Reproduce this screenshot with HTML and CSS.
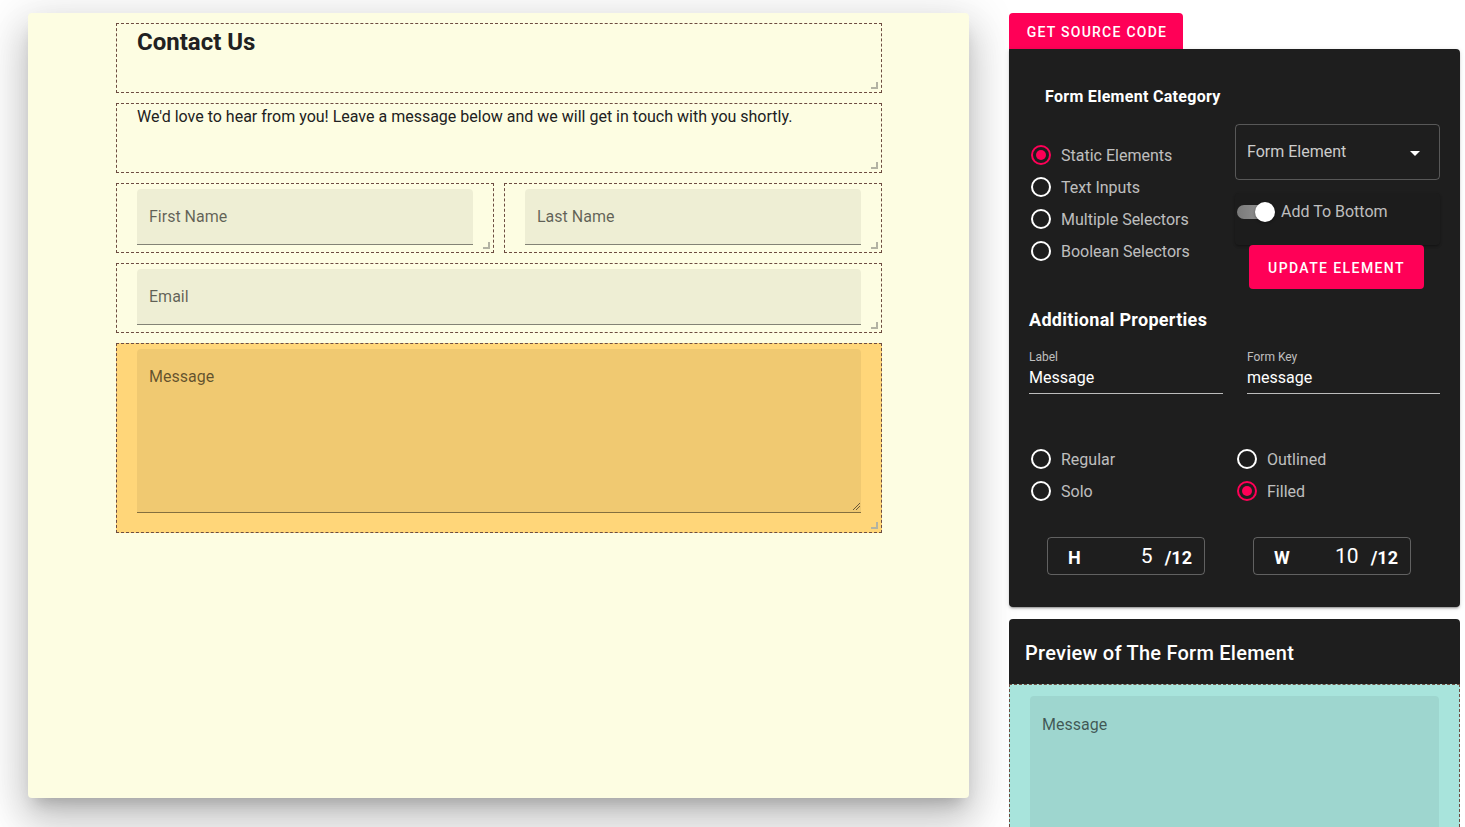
FILE: index.html
```html
<!DOCTYPE html>
<html lang="en">
<head>
<meta charset="utf-8">
<title>Form Builder</title>
<link rel="stylesheet" href="styles.css">
</head>
<body>
<div class="page">
  <section class="canvas">
    <div class="form">
      <div class="cell grip">
        <h1 class="title">Contact Us</h1>
      </div>
      <div class="cell grip cell-text">
        <p class="desc">We'd love to hear from you! Leave a message below and we will get in touch with you shortly.</p>
      </div>
      <div class="row">
        <div class="cell grip">
          <div class="field"><span class="field-label">First Name</span></div>
        </div>
        <div class="cell grip">
          <div class="field"><span class="field-label">Last Name</span></div>
        </div>
      </div>
      <div class="cell grip">
        <div class="field"><span class="field-label">Email</span></div>
      </div>
      <div class="cell grip cell-active">
        <div class="field field-area">
          <span class="field-label">Message</span>
          <svg class="area-grip" width="8" height="8" viewBox="0 0 8 8"><path d="M1 8 L8 1 M4 8 L8 4" stroke="#6b5a3a" stroke-width="1"/></svg>
        </div>
      </div>
    </div>
  </section>

  <aside class="side">
    <button class="btn btn-source">Get Source Code</button>
    <div class="panel">
      <h2 class="panel-title">Form Element Category</h2>
      <div class="split">
        <div class="radios">
          <label class="radio on"><span class="radio-icon"></span><span>Static Elements</span></label>
          <label class="radio"><span class="radio-icon"></span><span>Text Inputs</span></label>
          <label class="radio"><span class="radio-icon"></span><span>Multiple Selectors</span></label>
          <label class="radio"><span class="radio-icon"></span><span>Boolean Selectors</span></label>
        </div>
        <div class="controls">
          <div class="select"><span>Form Element</span><span class="caret"></span></div>
          <div class="switch-box">
            <span class="switch"><span class="track"></span><span class="thumb"></span></span>
            <span class="switch-label">Add To Bottom</span>
          </div>
          <button class="btn btn-update">Update Element</button>
        </div>
      </div>

      <h3 class="sub-title">Additional Properties</h3>
      <div class="props">
        <div class="prop">
          <span class="prop-label">Label</span>
          <span class="prop-value">Message</span>
        </div>
        <div class="prop">
          <span class="prop-label">Form Key</span>
          <span class="prop-value">message</span>
        </div>
      </div>

      <div class="variants">
        <label class="radio"><span class="radio-icon"></span><span>Regular</span></label>
        <label class="radio"><span class="radio-icon"></span><span>Outlined</span></label>
        <label class="radio"><span class="radio-icon"></span><span>Solo</span></label>
        <label class="radio on"><span class="radio-icon"></span><span>Filled</span></label>
      </div>

      <div class="sizes">
        <div class="size-box"><span class="size-key">H</span><span class="size-val">5</span><span class="size-max">/12</span></div>
        <div class="size-box"><span class="size-key">W</span><span class="size-val">10</span><span class="size-max">/12</span></div>
      </div>
    </div>

    <div class="preview">
      <div class="preview-head">Preview of The Form Element</div>
      <div class="preview-body">
        <div class="field field-area field-preview"><span class="field-label">Message</span></div>
      </div>
    </div>
  </aside>
</div>
</body>
</html>
```

FILE: styles.css
```css
html, body {
  margin: 0;
  padding: 0;
  height: 100%;
  overflow: hidden;
  background: #ffffff;
  font-family: Roboto, "Liberation Sans", Arial, sans-serif;
}

.page {
  display: flex;
  align-items: flex-start;
  gap: 40px;
  padding: 13px 0 0 28px;
}

/* ---------- left canvas ---------- */
.canvas {
  width: 941px;
  height: 785px;
  box-sizing: border-box;
  padding: 10px 87px 0 88px;
  background: #fdfde2;
  border-radius: 4px;
  box-shadow: 0 11px 15px -7px rgba(0,0,0,.2), 0 24px 38px 3px rgba(0,0,0,.14), 0 9px 46px 8px rgba(0,0,0,.12);
  flex: none;
}

.form {
  display: flex;
  flex-direction: column;
  gap: 10px;
}

.row {
  display: flex;
  gap: 10px;
}
.row > .cell { flex: 1; }

.cell {
  position: relative;
  box-sizing: border-box;
  height: 70px;
  border: 1px dashed #6d4c41;
  padding: 5px 20px 7px;
}

.grip::after {
  content: "";
  position: absolute;
  right: 3px;
  bottom: 3px;
  width: 5px;
  height: 5px;
  border-right: 2px solid #b3b3a3;
  border-bottom: 2px solid #b3b3a3;
}

.cell-text { padding-top: 1px; }

.title {
  margin: 0;
  font-size: 24px;
  line-height: 26px;
  font-weight: 700;
  color: #212121;
}

.desc {
  margin: 0;
  font-size: 16px;
  line-height: 24px;
  color: #212121;
}

.field {
  position: relative;
  height: 56px;
  box-sizing: border-box;
  background: rgba(0,0,0,.06);
  border-radius: 4px 4px 0 0;
  border-bottom: 1px solid rgba(0,0,0,.45);
  padding: 0 12px;
  display: flex;
  align-items: center;
}

.field-label {
  font-size: 16px;
  line-height: 20px;
  color: rgba(0,0,0,.6);
}

.cell-active {
  height: 190px;
  background: #ffd679;
}

.field-area {
  height: 164px;
  align-items: flex-start;
  padding-top: 18px;
}

.area-grip {
  position: absolute;
  right: 1px;
  bottom: 2px;
}

/* ---------- right side ---------- */
.side {
  width: 451px;
  flex: none;
  display: flex;
  flex-direction: column;
  align-items: flex-start;
}

.btn {
  border: none;
  background: #ff0057;
  color: #fff;
  font-family: Roboto, "Liberation Sans", Arial, sans-serif;
  font-weight: 500;
  font-size: 14px;
  letter-spacing: 1.25px;
  text-transform: uppercase;
  cursor: pointer;
  padding: 0;
}

.btn-source {
  width: 174px;
  height: 36px;
  padding-top: 2px;
  padding-left: 2px;
  border-radius: 4px 4px 0 0;
}

.panel {
  width: 451px;
  box-sizing: border-box;
  background: #1e1e1e;
  border-radius: 0 4px 4px 4px;
  padding: 36px 20px 32px;
  box-shadow: 0 3px 1px -2px rgba(0,0,0,.2), 0 2px 2px 0 rgba(0,0,0,.14), 0 1px 5px 0 rgba(0,0,0,.12);
  color: rgba(255,255,255,.72);
}

.panel-title {
  margin: 0 0 0 16px;
  font-size: 16px;
  line-height: 24px;
  font-weight: 700;
  letter-spacing: 0.3px;
  color: #fff;
}

.split {
  display: grid;
  grid-template-columns: 206px 205px;
  margin-top: 15px;
}

.radios {
  padding-top: 15px;
  display: flex;
  flex-direction: column;
}

.radio {
  display: flex;
  align-items: center;
  gap: 8px;
  height: 32px;
  font-size: 16px;
  color: rgba(255,255,255,.72);
}

.radio-icon {
  position: relative;
  width: 24px;
  height: 24px;
  flex: none;
}
.radio-icon::before {
  content: "";
  position: absolute;
  left: 2px;
  top: 2px;
  width: 16px;
  height: 16px;
  border: 2px solid #fff;
  border-radius: 50%;
}
.radio.on .radio-icon::before { border-color: #ff0057; }
.radio.on .radio-icon::after {
  content: "";
  position: absolute;
  left: 7px;
  top: 7px;
  width: 10px;
  height: 10px;
  border-radius: 50%;
  background: #ff0057;
}

.controls {
  display: flex;
  flex-direction: column;
  align-items: flex-start;
}

.select {
  width: 205px;
  height: 56px;
  box-sizing: border-box;
  border: 1px solid rgba(255,255,255,.26);
  border-radius: 4px;
  padding: 0 19px 2px 11px;
  display: flex;
  align-items: center;
  justify-content: space-between;
  font-size: 16px;
  color: rgba(255,255,255,.78);
}

.caret {
  width: 0;
  height: 0;
  border-left: 5px solid transparent;
  border-right: 5px solid transparent;
  border-top: 5px solid #fff;
  margin-top: 4px;
}

.switch-box {
  margin-top: 13px;
  width: 205px;
  height: 52px;
  box-sizing: border-box;
  padding: 7px 2px 0;
  display: flex;
  align-items: flex-start;
  gap: 6px;
  border-radius: 4px;
  background: #1c1c1c;
  box-shadow: 0 2px 3px -1px rgba(0,0,0,.3), 0 1px 3px 0 rgba(0,0,0,.15);
}

.switch {
  position: relative;
  width: 38px;
  height: 24px;
  flex: none;
}
.track {
  position: absolute;
  left: 0;
  top: 5px;
  width: 34px;
  height: 14px;
  border-radius: 7px;
  background: linear-gradient(90deg, #7a7a7a, #9a9a9a);
}
.thumb {
  position: absolute;
  right: 0;
  top: 2px;
  width: 20px;
  height: 20px;
  border-radius: 50%;
  background: #fff;
  box-shadow: 0 1px 3px rgba(0,0,0,.4);
}
.switch-label {
  font-size: 16px;
  line-height: 24px;
  color: rgba(255,255,255,.72);
}

.btn-update {
  margin-left: 14px;
  width: 175px;
  height: 44px;
  padding-top: 2px;
  border-radius: 4px;
  font-size: 14px;
  letter-spacing: 1.4px;
}

.sub-title {
  margin: 19px 0 0;
  font-size: 18px;
  line-height: 24px;
  font-weight: 700;
  letter-spacing: 0.3px;
  color: #fff;
}

.props {
  display: grid;
  grid-template-columns: 194px 193px;
  gap: 24px;
  margin-top: 17px;
}

.prop {
  display: flex;
  flex-direction: column;
  border-bottom: 1px solid rgba(255,255,255,.7);
  padding-bottom: 3px;
}
.prop-label {
  font-size: 12px;
  line-height: 16px;
  color: rgba(255,255,255,.72);
}
.prop-value {
  font-size: 16px;
  line-height: 24px;
  margin-top: 1px;
  color: #fff;
}

.variants {
  display: grid;
  grid-template-columns: 206px 205px;
  margin-top: 49px;
}

.sizes {
  display: flex;
  gap: 48px;
  margin: 30px 0 0 18px;
}

.size-box {
  width: 158px;
  height: 38px;
  box-sizing: border-box;
  border: 1px solid rgba(255,255,255,.3);
  border-radius: 4px;
  padding: 7px 12px 0 20px;
  display: flex;
  align-items: baseline;
  color: #fff;
}
.size-key {
  font-size: 18px;
  font-weight: 700;
  line-height: 24px;
  margin-right: auto;
}
.size-val {
  font-size: 21px;
  font-weight: 400;
  line-height: 24px;
  position: relative;
  top: -1px;
  margin-right: 12px;
}
.size-max {
  font-size: 18px;
  font-weight: 700;
  line-height: 24px;
}

.preview {
  margin-top: 12px;
  width: 451px;
}

.preview-head {
  height: 65px;
  box-sizing: border-box;
  background: #1e1e1e;
  border-radius: 4px 4px 0 0;
  padding: 2px 16px 0;
  display: flex;
  align-items: center;
  font-size: 20px;
  font-weight: 500;
  letter-spacing: 0.25px;
  color: #fff;
}

.preview-body {
  background: #a8e4dc;
  border: 1px dashed #6d4c41;
  padding: 11px 20px 20px;
  height: 200px;
}

.field-preview {
  height: 170px;
  padding-top: 19px;
}
```
